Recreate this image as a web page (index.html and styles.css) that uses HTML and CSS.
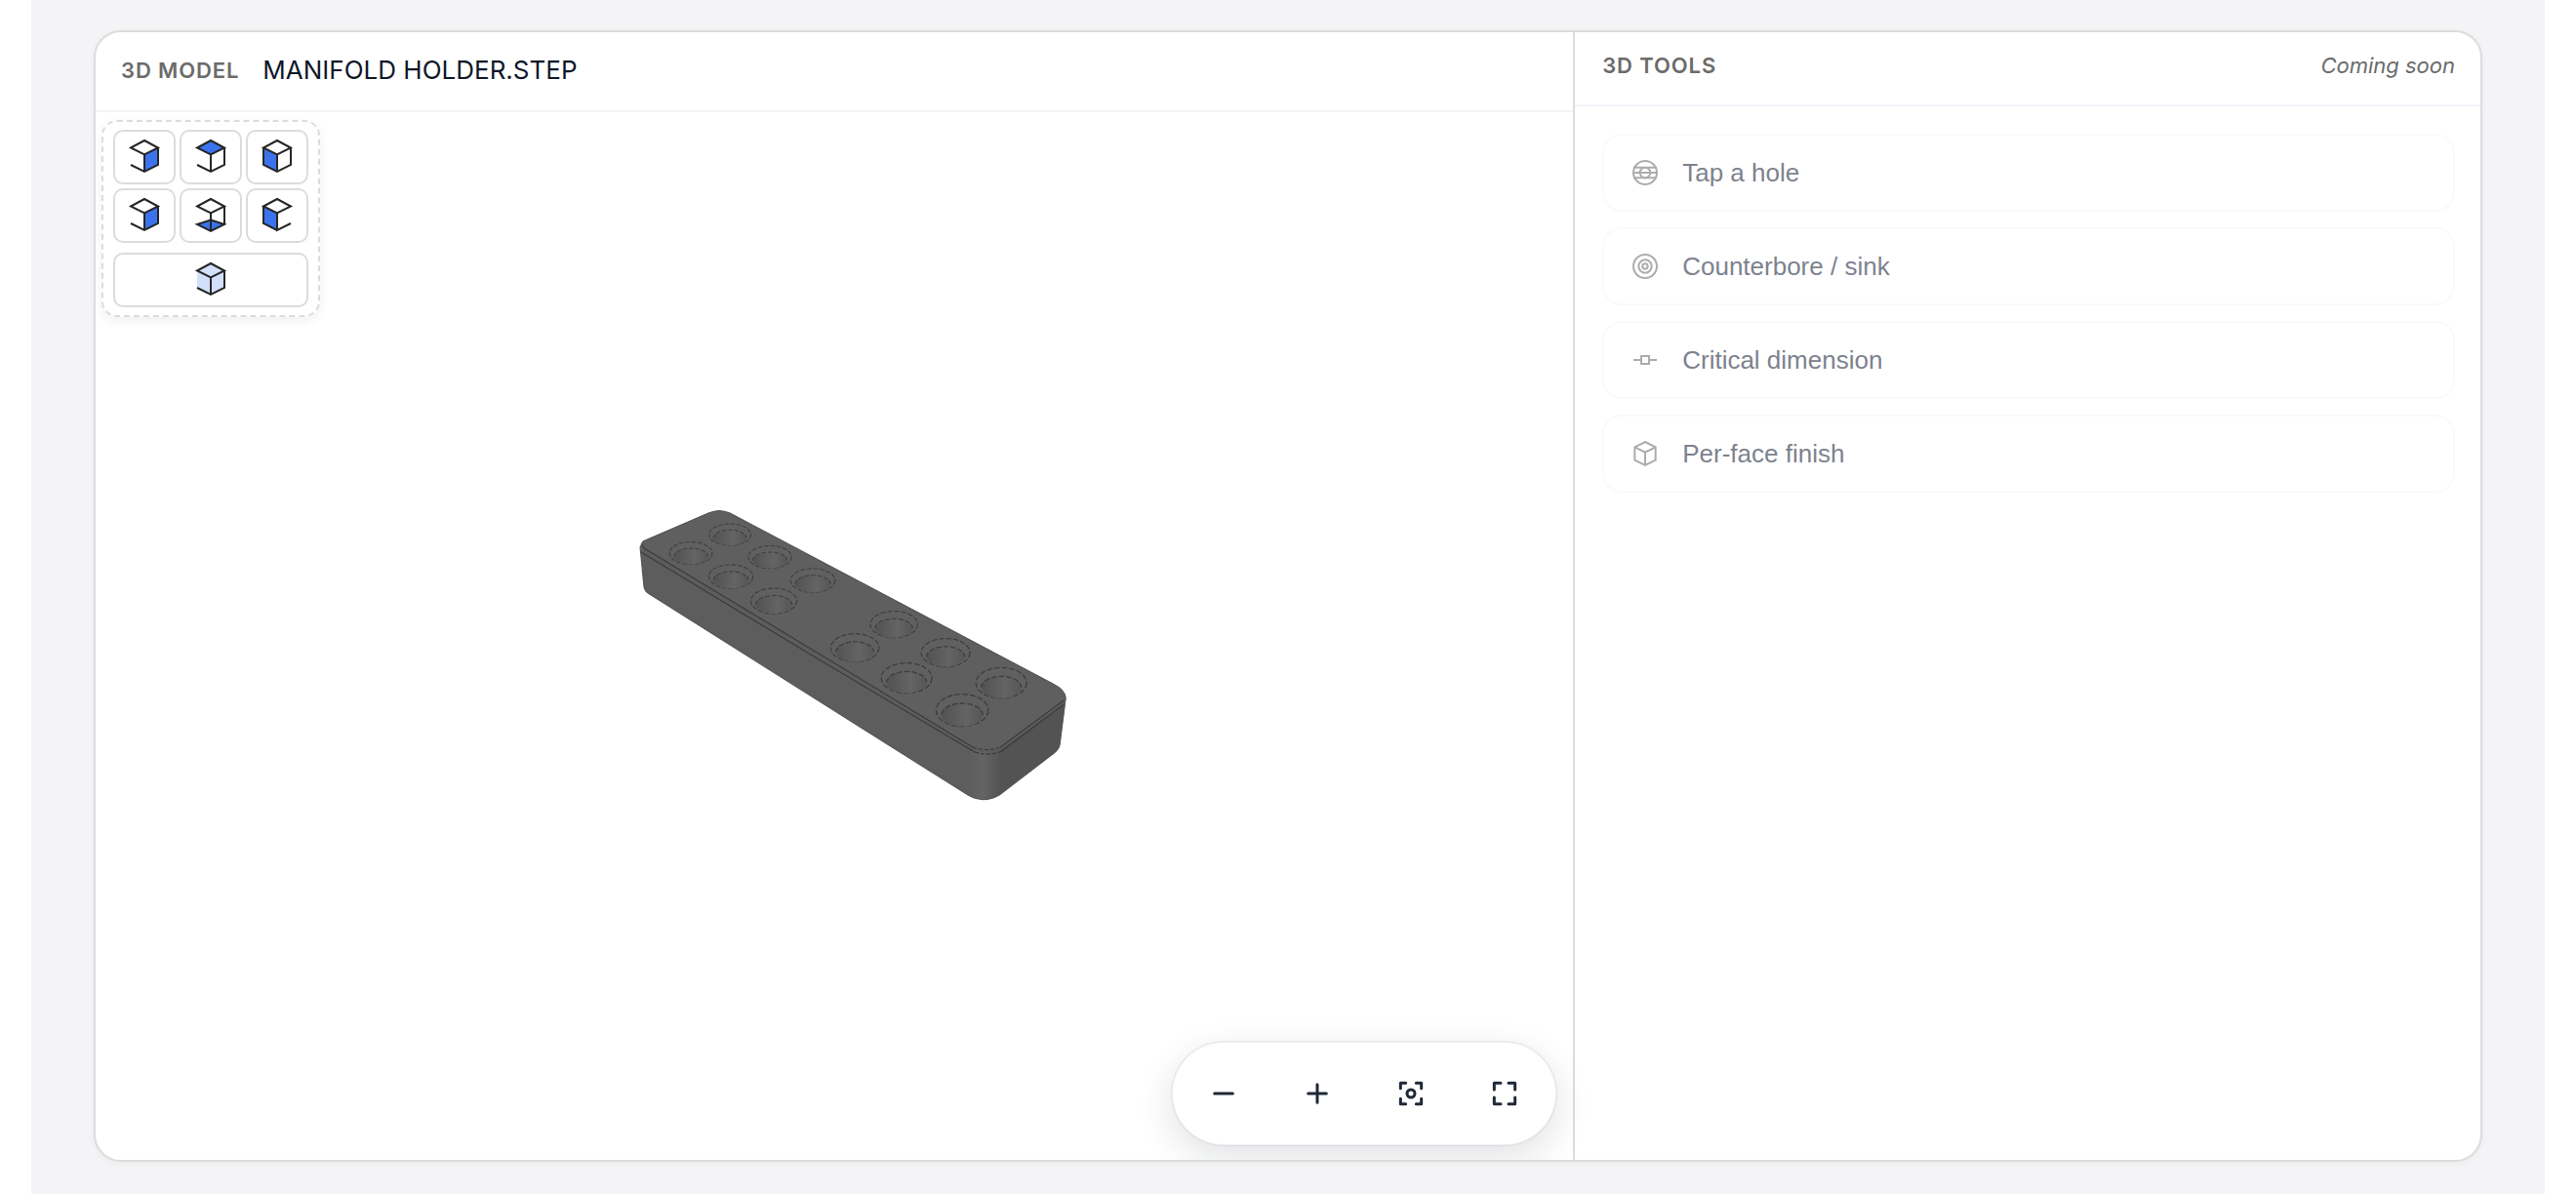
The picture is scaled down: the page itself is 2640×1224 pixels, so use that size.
FILE: index.html
```html
<!DOCTYPE html>
<html lang="en">
<head>
<meta charset="utf-8">
<meta name="viewport" content="width=device-width, initial-scale=1">
<title>MANIFOLD HOLDER.STEP</title>
<link rel="stylesheet" href="styles.css">
</head>
<body>
<main class="page">
  <div class="workspace">
    <section class="model">
      <header class="panel-header">
        <h2 class="panel-title">3D MODEL</h2>
        <span class="file-name">MANIFOLD HOLDER.STEP</span>
      </header>
      <div class="viewport">
        <svg class="scene" viewBox="99 116 1514 1074" role="img" aria-label="Manifold holder part">
          <defs>
            <linearGradient id="bore" x1="0" x2="1" y1="0" y2="0">
              <stop offset="0" stop-color="#525252"/>
              <stop offset=".6" stop-color="#646464"/>
              <stop offset="1" stop-color="#565656"/>
            </linearGradient>
            <linearGradient id="corner" x1="0" x2="1" y1="0" y2="0">
              <stop offset="0" stop-color="#5d5d5d"/>
              <stop offset=".45" stop-color="#646464"/>
              <stop offset="1" stop-color="#535353"/>
            </linearGradient>
            <g id="hole">
              <ellipse class="rim" rx="24" ry="14"/>
              <ellipse class="bore" cx="0" cy="4" rx="19" ry="10"/>
              <path class="bore-edge" d="M-19 4A19 10 0 0 1 19 4"/>
            </g>
          </defs>
          <path class="side" d="M657 562 L660 556 L727 527 Q738 522 749 527 L1080 702 Q1095 710 1093 719 L1087 764 Q1086 769 1081 773 L1025 816 Q1009 825 993 816 L665 609 Q662 607 661 603 Z"/>
          <path class="end" d="M1024 771 L1092 722 L1087 764 Q1086 769 1081 773 L1025 816 Z"/>
          <path class="round" d="M996 768 Q1012 776 1026 770 L1025 816 Q1009 825 993 816 Z"/>
          <path class="top" d="M659 562 Q655 558 666 553 L727 527 Q738 522 749 527 L1080 702 Q1096 711 1090 719 L1026 767 Q1012 773 998 767 Z"/>
          <path class="edge" d="M658 558 L661 563 L840 671 L998 767 M658 567 L840 677 L1000 772 M1026 767 L1091 719 M1026 772 L1091 723"/>
          <path class="edge dashed" d="M998 767 Q1012 772 1026 767 M1000 772 Q1012 776 1026 772"/>
          <path class="outline" d="M1093 716 L1087 764 Q1086 769 1081 773 L1025 816 Q1009 825 993 816 L665 609 Q662 607 661 603 L657 562 L660 556 L727 527 Q738 522 749 527 L1080 702 Q1092 708 1093 716"/>
          <use href="#hole" transform="translate(749 549) scale(.89 .79)"/>
          <use href="#hole" transform="translate(709 568) scale(.91 .83)"/>
          <use href="#hole" transform="translate(790 572) scale(.92 .83)"/>
          <use href="#hole" transform="translate(750 592) scale(.94 .87)"/>
          <use href="#hole" transform="translate(834 596) scale(.95 .88)"/>
          <use href="#hole" transform="translate(794 617) scale(.98 .93)"/>
          <use href="#hole" transform="translate(917 641) scale(1.01 .97)"/>
          <use href="#hole" transform="translate(877 665) scale(1.03 1.03)"/>
          <use href="#hole" transform="translate(970 670) scale(1.04 1.04)"/>
          <use href="#hole" transform="translate(930 696) scale(1.08 1.11)"/>
          <use href="#hole" transform="translate(1027 701) scale(1.08 1.12)"/>
          <use href="#hole" transform="translate(987 729) scale(1.11 1.18)"/>
        </svg>

        <div class="views" role="group" aria-label="Standard views">
          <button class="view" type="button" aria-label="Right view"><svg viewBox="0 0 40 40"><path class="face" d="M20 17 34 10.500V28L20 35Z"/><path d="M20 3 34 10.500 20 17.500 6 10.500ZM20 17.500V35M34 10.500V28L20 35 6 28"/></svg></button>
          <button class="view" type="button" aria-label="Top view"><svg viewBox="0 0 40 40"><path class="face" d="M20 3 34 10.500 20 17.500 6 10.500Z"/><path d="M20 3 34 10.500 20 17.500 6 10.500ZM20 17.500V35M34 10.500V28L20 35 6 28"/></svg></button>
          <button class="view" type="button" aria-label="Front view"><svg viewBox="0 0 40 40"><path class="face" d="M6 10.500 20 17.500V35L6 28Z"/><path d="M20 3 34 10.500 20 17.500 6 10.500ZM20 17.500V35M34 10.500V28L20 35 6 28V10.500"/></svg></button>
          <button class="view" type="button" aria-label="Back view"><svg viewBox="0 0 40 40"><path class="face" d="M20 17 34 10.500V28L20 35Z"/><path d="M20 3 34 10.500 20 17.500 6 10.500ZM20 17.500V35M34 10.500V28L20 35 6 28"/></svg></button>
          <button class="view" type="button" aria-label="Bottom view"><svg viewBox="0 0 40 40"><path class="face" d="M20 24 34 29 20 36 6 29Z"/><path d="M20 3 34 10.500 20 17.500 6 10.500ZM20 17.500V36M34 10.500V29M20 24.500 34 29 20 36 6 29Z"/></svg></button>
          <button class="view" type="button" aria-label="Left view"><svg viewBox="0 0 40 40"><path class="face" d="M6 10.500 20 17.500V35L6 28Z"/><path d="M20 3 34 10.500 20 17.500 6 10.500ZM20 17.500V35L34 28M20 35 6 28V10.500"/></svg></button>
          <button class="view view-wide" type="button" aria-label="Isometric view"><svg viewBox="0 0 40 40"><path class="face-soft" d="M20 3 34 10.500V28L20 35 6 28V10.500Z"/><path d="M20 3 34 10.500 20 17.500 6 10.500ZM20 17.500V35M34 10.500V28L20 35 6 28"/></svg></button>
        </div>

        <div class="zoom-bar" role="toolbar" aria-label="Zoom">
          <button class="zoom-button" type="button" aria-label="Zoom out"><svg viewBox="0 0 24 24"><path d="M5 12h14"/></svg></button>
          <button class="zoom-button" type="button" aria-label="Zoom in"><svg viewBox="0 0 24 24"><path d="M5 12h14M12 5v14"/></svg></button>
          <button class="zoom-button" type="button" aria-label="Fit to view"><svg viewBox="0 0 24 24"><path d="M4 8V4h4M16 4h4v4M20 16v4h-4M8 20H4v-4"/><circle cx="12" cy="12" r="3"/></svg></button>
          <button class="zoom-button" type="button" aria-label="Full screen"><svg viewBox="0 0 24 24"><path d="M4 9V4h5M15 4h5v5M20 15v5h-5M9 20H4v-5"/></svg></button>
        </div>
      </div>
    </section>

    <aside class="tools">
      <header class="panel-header tools-header">
        <h2 class="panel-title">3D TOOLS</h2>
        <em class="soon">Coming soon</em>
      </header>
      <div class="tool-list">
        <button class="tool" type="button" disabled><svg viewBox="0 0 24 24"><circle cx="12" cy="12" r="9"/><circle cx="12" cy="12" r="4"/><path d="M3 8h18M3 12h18M3 16h18"/></svg>Tap a hole</button>
        <button class="tool" type="button" disabled><svg viewBox="0 0 24 24"><circle cx="12" cy="12" r="9"/><circle cx="12" cy="12" r="5"/><circle cx="12" cy="12" r="2"/></svg>Counterbore / sink</button>
        <button class="tool" type="button" disabled><svg viewBox="0 0 24 24"><path d="M3 12h6M15 12h6M9 9h6v6H9Z"/></svg>Critical dimension</button>
        <button class="tool" type="button" disabled><svg viewBox="0 0 24 24"><path d="M12 3 20 7v10l-8 4-8-4V7ZM4 7l8 4 8-4M12 11v10"/></svg>Per-face finish</button>
      </div>
    </aside>
  </div>
</main>
</body>
</html>
```
FILE: styles.css
```css
* {
  box-sizing: border-box;
}

body {
  margin: 0;
  padding: 0 32px;
  background: #fff;
  font-family: Inter, "Liberation Sans", sans-serif;
  font-size: 26px;
}

button {
  margin: 0;
  padding: 0;
  font: inherit;
  color: inherit;
  background: #fff;
  border: 0;
}

.page {
  display: flex;
  min-height: 100vh;
  padding: 31px 64px 33px;
  background: #f4f4f6;
}

.workspace {
  flex: 1;
  display: grid;
  grid-template-columns: minmax(0, 57fr) minmax(0, 35fr);
  overflow: hidden;
  background: #fff;
  border: 2px solid #dcdcdc;
  border-radius: 28px;
  box-shadow: 0 2px 6px rgba(0, 0, 0, 0.04);
}

.model,
.tools {
  display: flex;
  flex-direction: column;
}

.tools {
  border-left: 2px solid #dcdcdc;
}

.panel-header {
  display: flex;
  align-items: center;
  gap: 24px;
  padding: 20px 26px 22px;
  line-height: 38px;
  border-bottom: 2px solid #f1f5f9;
}

.panel-title {
  margin: 0;
  font-size: 22px;
  font-weight: 600;
  letter-spacing: 0.04em;
  color: #6b6b6b;
}

.file-name {
  color: #0f172a;
}

.tools-header {
  justify-content: space-between;
  padding-bottom: 26px;
  padding-left: 28px;
  line-height: 28px;
}

.soon {
  font-size: 22px;
  color: #6b6b6b;
}

.viewport {
  position: relative;
  flex: 1;
  display: flex;
  min-height: 520px;
}

.scene {
  flex: 1;
  width: 100%;
  height: 100%;
  min-width: 0;
}

.side {
  fill: #5d5d5d;
}

.top {
  fill: #5f5f5f;
}

.end {
  fill: #535353;
}

.round {
  fill: url(#corner);
}

.edge,
.outline {
  fill: none;
  stroke: #3c3c3c;
  stroke-width: 1.2;
}

.outline {
  stroke: #565656;
}

.dashed {
  stroke-dasharray: 4 2;
}

.rim,
.bore-edge {
  fill: #606060;
  stroke: #3e3e3e;
  stroke-width: 1.2;
  stroke-dasharray: 5 2;
}

.bore-edge {
  fill: none;
}

.bore {
  fill: url(#bore);
}

.views {
  position: absolute;
  top: 8px;
  left: 6px;
  display: grid;
  grid-template-columns: repeat(3, 64px);
  gap: 4px;
  padding: 8px 10px;
  background: #fff;
  border: 2px dashed #dcdcdc;
  border-radius: 16px;
  box-shadow: 0 4px 12px rgba(0, 0, 0, 0.06);
}

.view {
  display: flex;
  align-items: center;
  justify-content: center;
  height: 56px;
  border: 2px solid #dcdcdc;
  border-radius: 10px;
}

.view-wide {
  grid-column: 1 / -1;
  margin-top: 6px;
}

.view svg {
  width: 40px;
  height: 40px;
  fill: none;
  stroke: #262626;
  stroke-width: 2;
}

.view .face {
  fill: #3b73ed;
  stroke: none;
}

.view .face-soft {
  fill: #d3e0fb;
  stroke: none;
}

.zoom-bar {
  position: absolute;
  right: 16px;
  bottom: 14px;
  display: flex;
  gap: 16px;
  padding: 12px;
  background: #fff;
  background-clip: padding-box;
  border: 2px solid rgba(0, 0, 0, 0.06);
  border-radius: 54px;
  box-shadow: 0 12px 36px rgba(15, 23, 42, 0.12);
}

.zoom-button {
  display: flex;
  align-items: center;
  justify-content: center;
  width: 80px;
  height: 80px;
  border-radius: 50%;
}

.zoom-button svg {
  width: 32px;
  height: 32px;
  fill: none;
  stroke: #1f2937;
  stroke-width: 2.25;
  stroke-linecap: round;
  stroke-linejoin: round;
}

.tool-list {
  display: flex;
  flex-direction: column;
  gap: 16px;
  padding: 28px 26px 28px 28px;
}

.tool {
  display: flex;
  align-items: center;
  gap: 22px;
  height: 80px;
  padding: 0 26px;
  font-family: "Liberation Sans", Arial, sans-serif;
  color: #7d828e;
  border: 2px solid #f8fafc;
  border-radius: 20px;
}

.tool svg {
  width: 32px;
  height: 32px;
  fill: none;
  stroke: #acacac;
  stroke-width: 1.5;
}
```
